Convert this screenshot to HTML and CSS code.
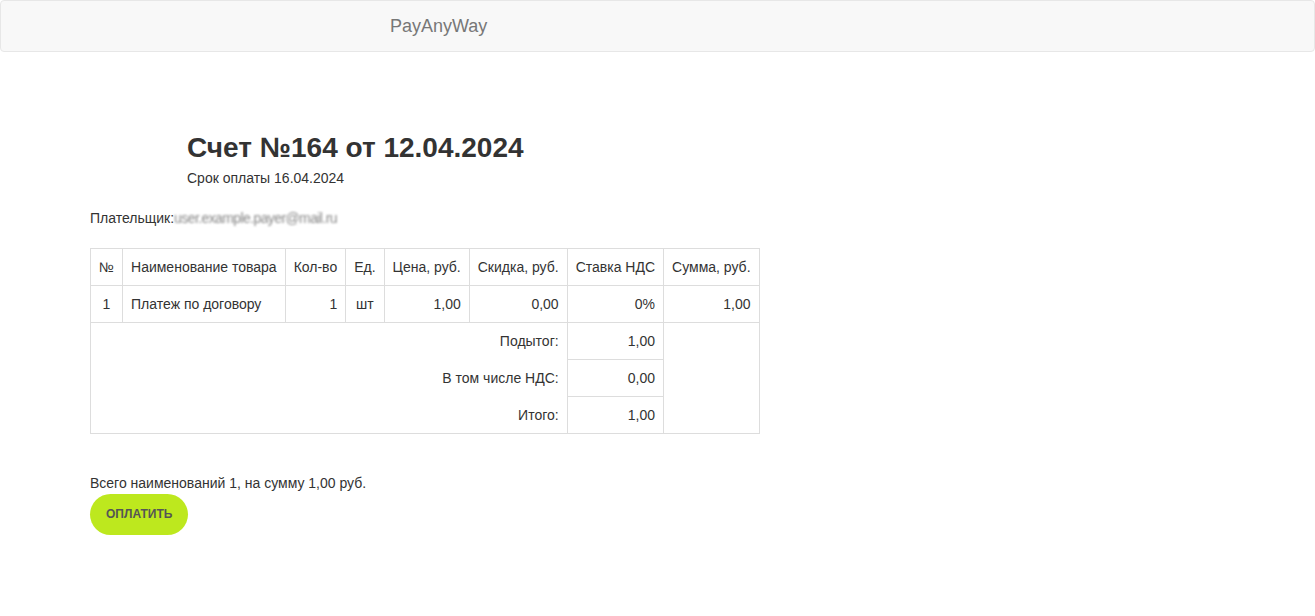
FILE: index.html
```html
<!DOCTYPE html>
<html lang="ru">
<head>
  <meta charset="UTF-8">
  <title>Счет №164 от 12.04.2024</title>
  <link rel="stylesheet" href="styles.css">
</head>
<body>
  <nav class="navbar">
    <a class="navbar-brand" href="#">PayAnyWay</a>
  </nav>

  <div class="content">
    <div class="invoice-head">
      <h1>Счет №164 от 12.04.2024</h1>
      <p>Срок оплаты 16.04.2024</p>
    </div>

    <p class="payer">Плательщик:<span class="masked">user.example.payer@mail.ru</span></p>

    <table class="invoice-table">
      <thead>
        <tr>
          <th>№</th>
          <th>Наименование товара</th>
          <th>Кол-во</th>
          <th>Ед.</th>
          <th>Цена, руб.</th>
          <th>Скидка, руб.</th>
          <th>Ставка НДС</th>
          <th>Сумма, руб.</th>
        </tr>
      </thead>
      <tbody>
        <tr>
          <td class="center">1</td>
          <td>Платеж по договору</td>
          <td class="num">1</td>
          <td class="center">шт</td>
          <td class="num">1,00</td>
          <td class="num">0,00</td>
          <td class="num">0%</td>
          <td class="num">1,00</td>
        </tr>
        <tr>
          <td colspan="6" class="label label-first">Подытог:</td>
          <td class="num">1,00</td>
          <td rowspan="3"></td>
        </tr>
        <tr>
          <td colspan="6" class="label label-mid">В том числе НДС:</td>
          <td class="num">0,00</td>
        </tr>
        <tr>
          <td colspan="6" class="label label-last">Итого:</td>
          <td class="num">1,00</td>
        </tr>
      </tbody>
    </table>

    <p class="total">Всего наименований 1, на сумму 1,00 руб.</p>
    <button class="pay-btn" type="button">ОПЛАТИТЬ</button>
  </div>
</body>
</html>
```

FILE: styles.css
```css
* {
  box-sizing: border-box;
}

body {
  margin: 0;
  font-family: "Liberation Sans", Arial, sans-serif;
  font-size: 14px;
  line-height: 1.42857;
  color: #333;
  background-color: #fff;
}

p {
  margin: 0;
}

.navbar {
  min-height: 52px;
  background-color: #f8f8f8;
  border: 1px solid #e7e7e7;
  border-radius: 4px;
  padding-left: 374px;
}

.navbar-brand {
  display: inline-block;
  padding: 15px;
  font-size: 18px;
  line-height: 20px;
  color: #777;
  text-decoration: none;
}

.content {
  padding: 0 90px;
}

.invoice-head {
  margin: 80px 0 0 97px;
}

.invoice-head h1 {
  margin: 0 0 6px;
  font-size: 28px;
  line-height: 31px;
  font-weight: bold;
}

.payer {
  margin-top: 20px;
}

.masked {
  color: #888;
  filter: blur(0.9px);
  letter-spacing: -0.6px;
}

.invoice-table {
  margin-top: 19px;
  border-collapse: collapse;
  border: 1px solid #ddd;
}

.invoice-table th,
.invoice-table td {
  padding: 8px;
  border: 1px solid #ddd;
  font-weight: normal;
  text-align: left;
  line-height: 20px;
}

.invoice-table .center {
  text-align: center;
}

.invoice-table .num,
.invoice-table .label {
  text-align: right;
}

.invoice-table .label-first {
  border-bottom: none;
}

.invoice-table .label-mid {
  border-top: none;
  border-bottom: none;
}

.invoice-table .label-last {
  border-top: none;
}

.total {
  margin-top: 40px;
}

.pay-btn {
  display: block;
  height: 41px;
  padding: 0 16px;
  border: none;
  border-radius: 21px;
  background-color: #bde81e;
  color: #555;
  font-family: "Liberation Sans", Arial, sans-serif;
  font-size: 12px;
  font-weight: bold;
  cursor: pointer;
}
```
